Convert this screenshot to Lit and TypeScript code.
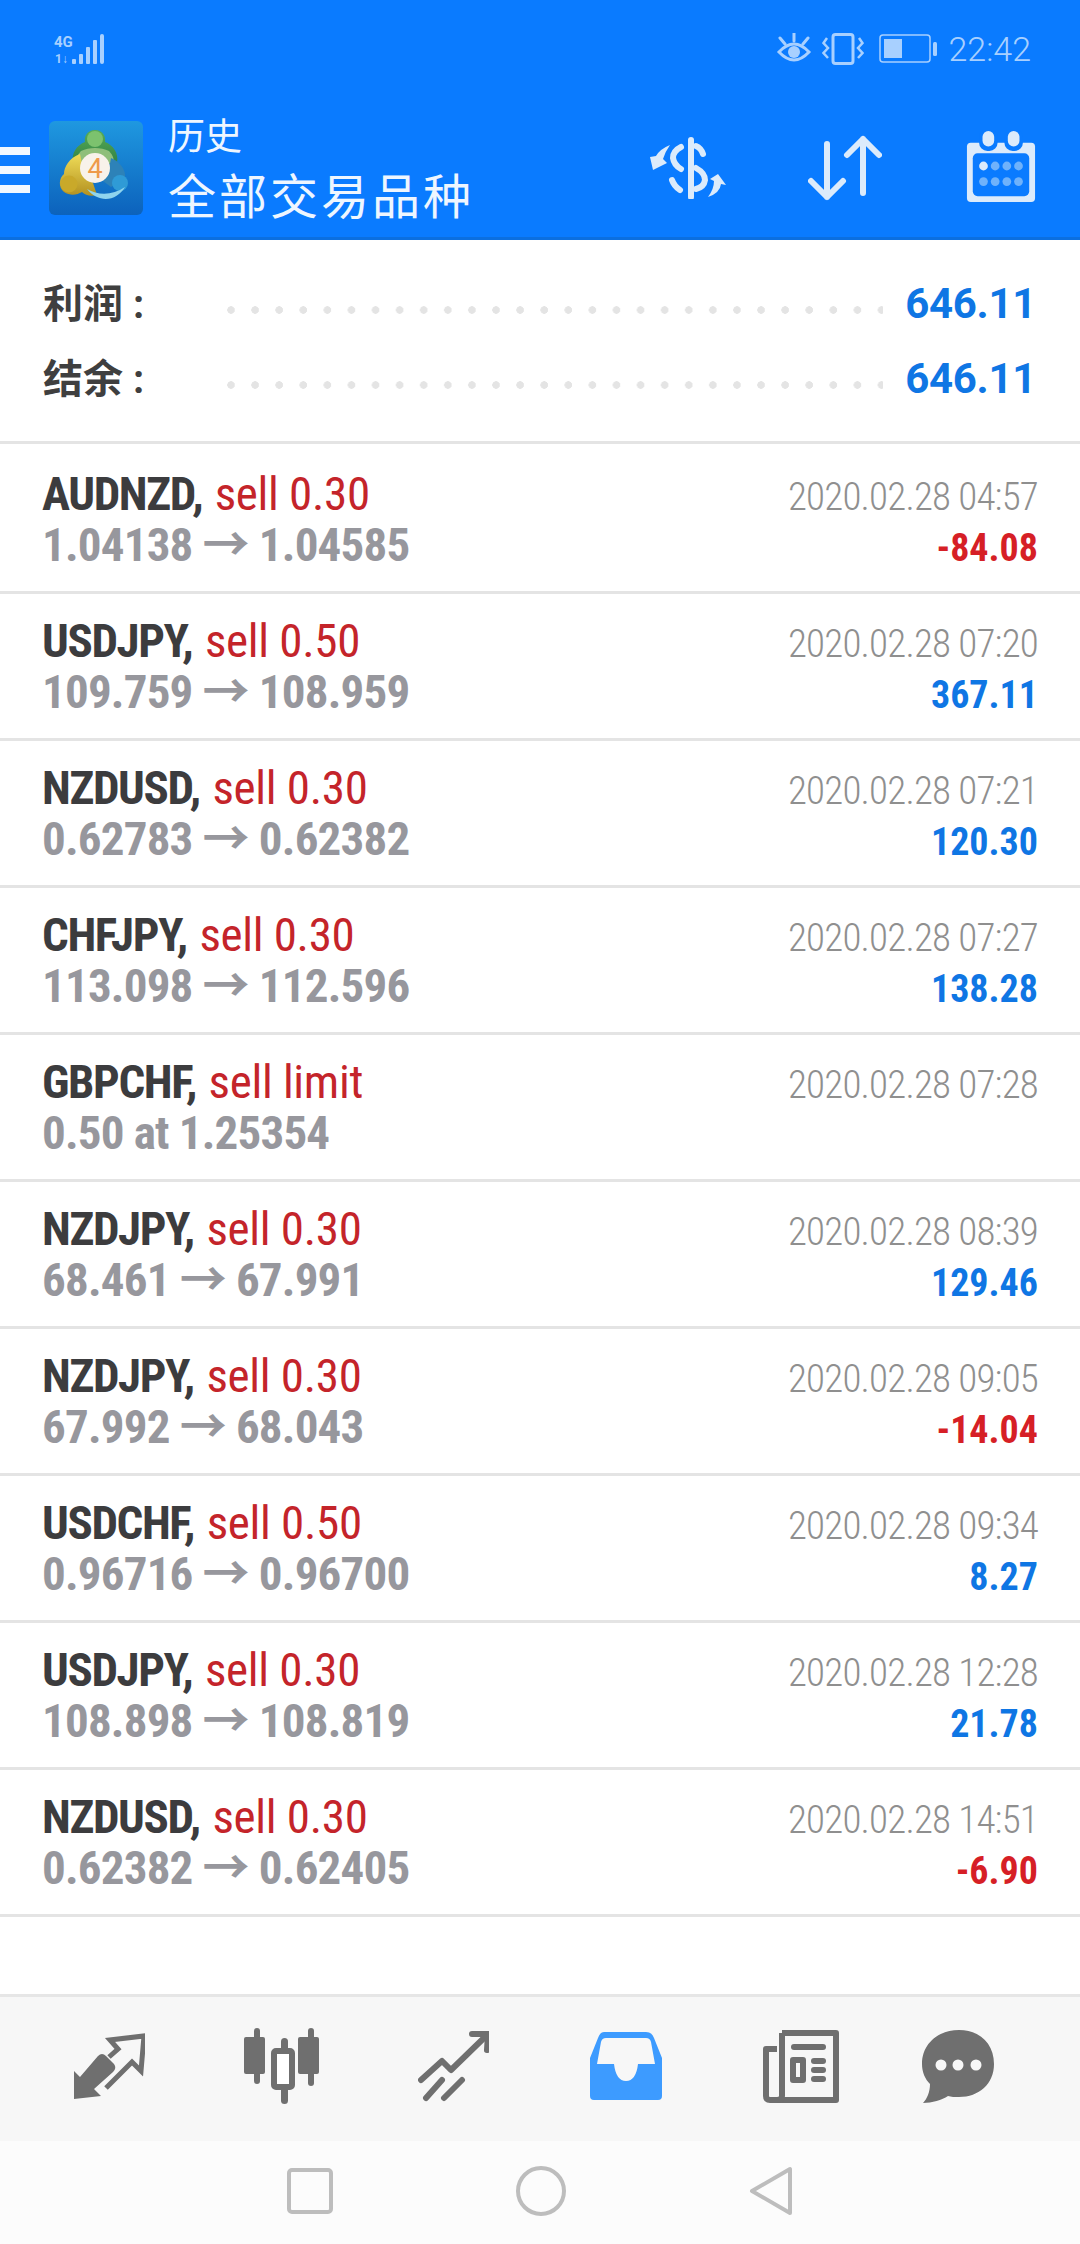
import { LitElement, html, css, svg } from "lit";
import { customElement } from "lit/decorators.js";

type Row = { sym: string; act: string; price: string; to?: string; date: string; profit?: string };

const ROWS: Row[] = [
  { sym: "AUDNZD", act: "sell 0.30", price: "1.04138", to: "1.04585", date: "2020.02.28 04:57", profit: "-84.08" },
  { sym: "USDJPY", act: "sell 0.50", price: "109.759", to: "108.959", date: "2020.02.28 07:20", profit: "367.11" },
  { sym: "NZDUSD", act: "sell 0.30", price: "0.62783", to: "0.62382", date: "2020.02.28 07:21", profit: "120.30" },
  { sym: "CHFJPY", act: "sell 0.30", price: "113.098", to: "112.596", date: "2020.02.28 07:27", profit: "138.28" },
  { sym: "GBPCHF", act: "sell limit", price: "0.50 at 1.25354", date: "2020.02.28 07:28" },
  { sym: "NZDJPY", act: "sell 0.30", price: "68.461", to: "67.991", date: "2020.02.28 08:39", profit: "129.46" },
  { sym: "NZDJPY", act: "sell 0.30", price: "67.992", to: "68.043", date: "2020.02.28 09:05", profit: "-14.04" },
  { sym: "USDCHF", act: "sell 0.50", price: "0.96716", to: "0.96700", date: "2020.02.28 09:34", profit: "8.27" },
  { sym: "USDJPY", act: "sell 0.30", price: "108.898", to: "108.819", date: "2020.02.28 12:28", profit: "21.78" },
  { sym: "NZDUSD", act: "sell 0.30", price: "0.62382", to: "0.62405", date: "2020.02.28 14:51", profit: "-6.90" },
];

const ICON_TRADE = svg`<path d="M2 68 L2 40 L8 46 L26 25 Q30 21 34 25 L42 33 Q45 37 41 41 L22 58 L29 65 Z" fill="#6f6f6f"/><path d="M37 26 L46 18 L38 9 L72 5 L69 40 L60 31 L34 57" fill="none" stroke="#6f6f6f" stroke-width="5"/>`;

const ICON_CANDLES = svg`<g fill="#6f6f6f"><rect x="10" y="0" width="6" height="56" rx="3"/><rect x="0" y="9" width="21" height="37" rx="2"/><rect x="64" y="0" width="6" height="58" rx="3"/><rect x="54" y="9" width="21" height="37" rx="2"/><rect x="37" y="10" width="7" height="66" rx="3.5"/></g><rect x="30" y="23" width="18" height="36" rx="2" fill="#fff" stroke="#6f6f6f" stroke-width="6"/>`;

const ICON_CHART = svg`<g fill="none" stroke="#6f6f6f" stroke-width="6" stroke-linecap="round" stroke-linejoin="round"><path d="M3 50 L24 31 L33 40 L68 6"/><path d="M54 4 L70 4 L69 20"/><path d="M8 68 L24 50"/><path d="M26 68 L44 50"/></g>`;

const ICON_INBOX = svg`<path fill="#3d9bff" d="M14 0 H56 Q62 0 64 6 L72 26 V64 Q72 68 68 68 H4 Q0 68 0 64 V26 L8 6 Q10 0 14 0Z"/><path fill="#f7f7f7" d="M16 6 H56 Q60 6 61 10 L65 32 H48 Q46 49 36 49 Q26 49 24 32 H7 L11 10 Q12 6 16 6Z"/>`;

const ICON_NEWS = svg`<g fill="none" stroke="#6f6f6f" stroke-width="6" stroke-linejoin="round"><path d="M19 3 H73 V70 H7 Q3 70 3 66 V19 H14"/><path d="M19 3 V66 Q19 70 14 70"/><rect x="30" y="30" width="10" height="20"/></g><g fill="#6f6f6f"><rect x="28" y="14" width="35" height="6" rx="3"/><rect x="48" y="28" width="15" height="6" rx="3"/><rect x="48" y="37" width="15" height="6" rx="3"/><rect x="48" y="46" width="15" height="6" rx="3"/></g>`;

const ICON_CHAT = svg`<path fill="#6f6f6f" d="M37 0 C58 0 72 14 72 34 C72 54 57 67 37 67 C33 67 29 67 26 66 C20 70 10 73 1 73 C5 69 8 62 8 54 C3 49 0 42 0 34 C0 14 16 0 37 0Z"/><g fill="#f7f7f7"><circle cx="19" cy="35" r="5.5"/><circle cx="36" cy="35" r="5.5"/><circle cx="54" cy="35" r="5.5"/></g>`;

const NAV = [
  { w: 73, h: 70, icon: ICON_TRADE },
  { w: 76, h: 76, icon: ICON_CANDLES },
  { w: 71, h: 72, icon: ICON_CHART },
  { w: 72, h: 68, icon: ICON_INBOX },
  { w: 76, h: 73, icon: ICON_NEWS },
  { w: 72, h: 73, icon: ICON_CHAT },
];

@customElement("app-root")
export class AppRoot extends LitElement {
  static styles = css`
    :host {
      display: flex;
      flex-direction: column;
      height: 2244px;
      width: 1080px;
      background: #fff;
      font-family: Roboto, "Noto Sans CJK SC", sans-serif;
      overflow: hidden;
    }
    svg {
      display: block;
      flex: none;
    }
    header {
      background: #0a7bff;
      border-bottom: 3px solid #0b6fe0;
      height: 240px;
      box-sizing: border-box;
    }
    .status {
      height: 98px;
      display: flex;
      align-items: center;
      padding: 0 49px 0 53px;
      color: #a8d0ff;
    }
    .status .right {
      margin-left: auto;
      display: flex;
      align-items: center;
      gap: 10px;
    }
    .status .batt {
      margin-left: 5px;
    }
    .time {
      font-size: 34px;
      font-weight: 300;
      margin-left: -1px;
    }
    .bar {
      height: 139px;
      display: flex;
      align-items: center;
      padding-right: 43px;
    }
    .burger {
      width: 30px;
      display: flex;
      flex-direction: column;
      gap: 11px;
      margin-top: 4px;
    }
    .burger i {
      display: block;
      height: 8px;
      background: #f0f7ff;
    }
    .logo {
      margin-left: 19px;
      margin-top: 1px;
    }
    .titles {
      margin-left: 25px;
      margin-top: 4px;
      color: #eef6ff;
      font-weight: 400;
    }
    .t1 {
      font-size: 37px;
      line-height: 50px;
      margin-top: 2px;
    }
    .t2 {
      font-size: 48px;
      line-height: 62px;
      margin-top: 4px;
      letter-spacing: 3px;
    }
    .tools {
      margin-left: auto;
      display: flex;
      align-items: center;
      gap: 80px;
    }
    .tools .arrows {
      margin-right: 4px;
    }
    .tools .cal {
      margin-top: -4px;
      margin-right: 1px;
    }

    main {
      flex: 1;
    }
    .summary {
      height: 204px;
      box-sizing: border-box;
      border-bottom: 3px solid #e4e4e4;
      padding: 23px 44px 0 43px;
      margin-bottom: 3px;
    }
    .sumrow {
      height: 75px;
      display: flex;
      align-items: center;
      color: #3f3f3f;
      font-size: 40px;
      font-weight: 700;
    }
    .sumrow .label {
      width: 184px;
    }
    .dots {
      flex: 1;
      height: 8px;
      margin-top: 18px;
      margin-right: 22px;
      background-image: radial-gradient(circle at 4px 4px, #e4e4e4 3.5px, transparent 4px);
      background-size: 24.1px 8px;
      background-repeat: repeat-x;
    }
    .sumrow .val {
      color: #0f76e4;
      font-size: 42px;
      letter-spacing: -0.3px;
      margin-top: 5px;
    }

    .row {
      height: 147px;
      box-sizing: border-box;
      border-bottom: 3px solid #e4e4e4;
      padding: 21px 43px 0 42px;
      display: flex;
      justify-content: space-between;
      font-stretch: 75%;
    }
    .l1,
    .l2,
    .date,
    .profit {
      white-space: nowrap;
    }
    .l1 {
      font-size: 47px;
      line-height: 52px;
      color: #c4242a;
      letter-spacing: -0.3px;
    }
    .l1 b {
      color: #3c3c3e;
      font-weight: 700;
      letter-spacing: -1.4px;
      margin-right: 2px;
    }
    .l2 {
      font-size: 47px;
      line-height: 50px;
      font-weight: 700;
      color: #97979d;
      letter-spacing: -0.8px;
    }
    .right-col {
      text-align: right;
      margin-right: -1px;
      padding-top: 4px;
    }
    .date {
      font-size: 39px;
      line-height: 51px;
      color: #8f8f8f;
      font-weight: 350;
      letter-spacing: -0.8px;
    }
    .profit {
      font-size: 38px;
      line-height: 51px;
      font-weight: 700;
    }
    .loss {
      color: #d61f26;
    }
    .gain {
      color: #0f76e4;
    }

    nav {
      height: 147px;
      box-sizing: border-box;
      border-top: 3px solid #e6e6e6;
      background: #f7f7f7;
      display: flex;
      align-items: center;
      gap: 99px;
      padding: 0 0 6px 72px;
    }
    nav svg:nth-child(3) {
      margin-left: -1px;
    }
    nav svg:nth-child(4) {
      margin-left: 2px;
    }
    nav svg:nth-child(5) {
      margin-left: 2px;
    }
    nav svg:last-child {
      margin-left: -16px;
    }
    .sys {
      height: 103px;
      background: #fcfcfc;
      display: flex;
      align-items: center;
      justify-content: center;
      gap: 183px;
      padding-bottom: 4px;
      box-sizing: border-box;
    }
  `;

  renderRow(r: Row) {
    return html`<div class="row">
      <div>
        <div class="l1"><b>${r.sym},</b> ${r.act}</div>
        <div class="l2">${r.price}${r.to ? html` → ${r.to}` : ""}</div>
      </div>
      <div class="right-col">
        <div class="date">${r.date}</div>
        ${r.profit
          ? html`<div class="profit ${r.profit.startsWith("-") ? "loss" : "gain"}">${r.profit}</div>`
          : ""}
      </div>
    </div>`;
  }

  render() {
    return html`
      <header>
        <div class="status">
          <svg width="52" height="31" viewBox="0 0 52 31">
            <g fill="#a8d0ff">
              <text x="1" y="13" font-size="15" font-weight="700" font-family="Roboto">4G</text>
              <text x="2" y="29" font-size="12" font-weight="700" font-family="Roboto">1↓</text>
              <rect x="19" y="25" width="4" height="5" rx="1"/>
              <rect x="26" y="20" width="4" height="10" rx="1"/>
              <rect x="33" y="13" width="4" height="17" rx="1"/>
              <rect x="40" y="6" width="4" height="24" rx="1"/>
              <rect x="47" y="0" width="4" height="30" rx="2"/>
            </g>
          </svg>
          <div class="right">
            <svg width="36" height="32" viewBox="0 0 36 32" fill="none" stroke="#a8d0ff" stroke-width="3">
              <path d="M3 19 Q18 3 33 19 Q18 35 3 19Z"/>
              <circle cx="18" cy="19" r="6" fill="#a8d0ff" stroke="none"/>
              <path d="M18 0 V8 M4 5 L9 11 M32 5 L27 11" stroke-linecap="round"/>
            </svg>
            <svg width="42" height="32" viewBox="0 0 42 32" fill="none" stroke="#a8d0ff">
              <rect x="11" y="1.5" width="20" height="29" rx="2.5" stroke-width="3"/>
              <path d="M5 5 L1.5 10 L6 15 L1.5 20 L6 25 M37 5 L40.5 10 L36 15 L40.5 20 L36 25" stroke-width="2.5"/>
            </svg>
            <svg class="batt" width="60" height="30" viewBox="0 0 60 30">
              <rect x="1" y="1" width="50" height="27" rx="3" fill="none" stroke="#a8d0ff" stroke-width="1.5"/>
              <rect x="5" y="5" width="18" height="19" fill="#a8d0ff"/>
              <rect x="54" y="8" width="4" height="14" rx="1.5" fill="#a8d0ff"/>
            </svg>
            <span class="time">22:42</span>
          </div>
        </div>
        <div class="bar">
          <div class="burger"><i></i><i></i><i></i></div>
          <svg class="logo" width="94" height="94" viewBox="0 0 94 94">
            <defs>
              <linearGradient id="tile" x1="0" y1="0" x2="0" y2="1">
                <stop offset="0" stop-color="#1f98e0"/>
                <stop offset="1" stop-color="#0c62bc"/>
              </linearGradient>
              <linearGradient id="gold" x1="0" y1="0" x2="0" y2="1">
                <stop offset="0" stop-color="#efdc58"/>
                <stop offset="1" stop-color="#b39120"/>
              </linearGradient>
              <linearGradient id="leaf" x1="0" y1="0" x2="0" y2="1">
                <stop offset="0" stop-color="#58ad55"/>
                <stop offset="1" stop-color="#2f7f45"/>
              </linearGradient>
            </defs>
            <rect width="94" height="94" rx="6" fill="url(#tile)"/>
            <path d="M46 9 C54 9 57 16 56 21 C64 24 70 32 68 42 L46 44 L24 42 C22 32 28 24 36 21 C35 16 38 9 46 9Z" fill="url(#leaf)"/>
            <path d="M32 30 C28 34 27 38 27 42 L46 44 L65 42 C65 38 64 34 60 30 C52 26 40 26 32 30Z" fill="#8fbf7a"/>
            <circle cx="46" cy="18" r="8" fill="#7cc26e"/>
            <path d="M31 33 C20 37 15 46 15 53 C10 57 9 66 15 71 C21 75 28 74 33 71 C36 74 42 76 48 74 L44 62 L34 48Z" fill="url(#gold)"/>
            <circle cx="20" cy="63" r="8.5" fill="#c9a92a"/>
            <path d="M62 37 C72 41 77 50 76 56 L62 66 L54 60 L60 48Z" fill="#2d82b8"/>
            <circle cx="71" cy="62" r="8" fill="#2f9bd6"/>
            <path d="M38 68 C50 75 64 74 76 66 C68 80 50 83 38 68Z" fill="#8fd4ee"/>
            <circle cx="46" cy="47" r="15" fill="#f8f2ea"/>
            <text x="46" y="57" font-size="27" text-anchor="middle" fill="#ee9a4a" font-family="Roboto">4</text>
          </svg>
          <div class="titles">
            <div class="t1">历史</div>
            <div class="t2">全部交易品种</div>
          </div>
          <div class="tools">
            <svg width="80" height="62" viewBox="0 0 80 62">
              <g fill="none" stroke="#dcebfb" stroke-linecap="round" stroke-width="6">
                <path d="M43 3 V60"/>
                <path d="M33 10 Q25 14 25 21 Q26 28 33 32"/>
                <path d="M48 9 Q53 11 55 17"/>
                <path d="M48 31 Q57 36 57 43 Q56 50 48 52"/>
                <path d="M24 43 Q26 49 32 53"/>
              </g>
              <path d="M22 8 Q12 12 8 19 L2 20 L5 33 L19 26 L15 22 Q17 15 22 8Z" fill="#dcebfb"/>
              <path d="M60 60 Q72 56 73 47 L78 48 L70 37 L62 42 L66 44 Q66 52 60 60Z" fill="#dcebfb"/>
            </svg>
            <svg class="arrows" width="74" height="66" viewBox="0 0 74 66" fill="none" stroke="#dcebfb" stroke-width="6" stroke-linecap="round" stroke-linejoin="round">
              <path d="M19 9 V62 M3 46 L19 62 L35 46"/>
              <path d="M55 4 V58 M39 20 L55 4 L71 20"/>
            </svg>
            <svg class="cal" width="70" height="72" viewBox="0 0 70 74">
              <path fill="#dcebfb" d="M4 13 H66 Q70 13 70 17 V70 Q70 74 66 74 H4 Q0 74 0 70 V17 Q0 13 4 13Z"/>
              <rect x="6" y="24" width="58" height="44" rx="5" fill="#0a7bff"/>
              <g fill="#0a7bff"><rect x="14" y="0" width="16" height="20" rx="7" stroke="#0a7bff" stroke-width="3"/><rect x="40" y="0" width="16" height="20" rx="7" stroke="#0a7bff" stroke-width="3"/></g>
              <rect x="16" y="1" width="12" height="16" rx="6" fill="#dcebfb"/>
              <rect x="42" y="1" width="12" height="16" rx="6" fill="#dcebfb"/>
              <circle cx="17" cy="37" r="4.5" fill="#dcebfb"/>
              <g fill="#6fb2fb">
                <circle cx="29" cy="37" r="4.5"/><circle cx="41" cy="37" r="4.5"/><circle cx="53" cy="37" r="4.5"/>
                <circle cx="17" cy="53" r="4.5"/><circle cx="29" cy="53" r="4.5"/><circle cx="41" cy="53" r="4.5"/><circle cx="53" cy="53" r="4.5"/>
              </g>
            </svg>
          </div>
        </div>
      </header>
      <main>
        <div class="summary">
          <div class="sumrow"><span class="label">利润 :</span><span class="dots"></span><span class="val">646.11</span></div>
          <div class="sumrow"><span class="label">结余 :</span><span class="dots"></span><span class="val">646.11</span></div>
        </div>
        ${ROWS.map((r) => this.renderRow(r))}
      </main>
      <nav>
        ${NAV.map(
          (n) => html`<svg width="${n.w}" height="${n.h}" viewBox="0 0 ${n.w} ${n.h}">${n.icon}</svg>`
        )}
      </nav>
      <div class="sys">
        <svg width="46" height="46" viewBox="0 0 46 46"><rect x="2" y="2" width="42" height="42" rx="3" fill="none" stroke="#bdbdbd" stroke-width="4"/></svg>
        <svg width="50" height="50" viewBox="0 0 50 50"><circle cx="25" cy="25" r="23" fill="none" stroke="#bdbdbd" stroke-width="4"/></svg>
        <svg width="44" height="50" viewBox="0 0 44 50"><path d="M41 3 V47 L3 25Z" fill="none" stroke="#bdbdbd" stroke-width="4" stroke-linejoin="round"/></svg>
      </div>
    `;
  }
}
